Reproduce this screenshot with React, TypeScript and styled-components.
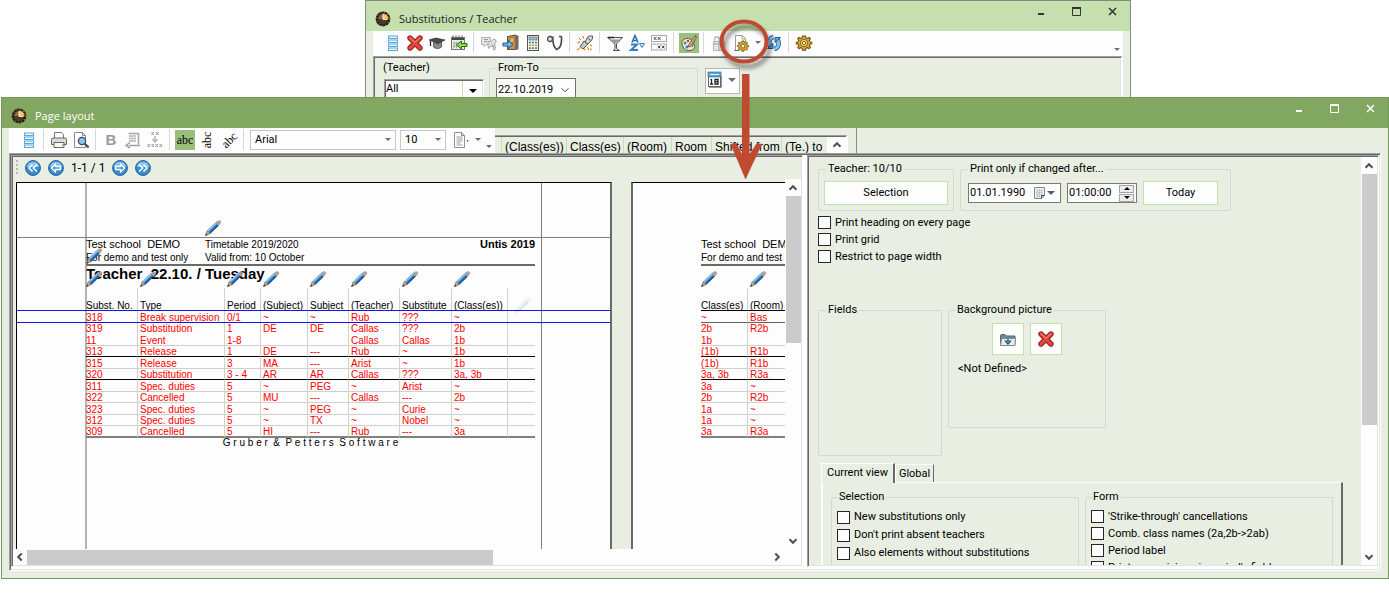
import React from "react";
import styled, { createGlobalStyle, css } from "styled-components";

const GlobalStyle = createGlobalStyle`
  *, *::before, *::after { box-sizing: border-box; }
  body { margin: 0; background: #ffffff; }
  button, input, select { font: inherit; color: inherit; margin: 0; }
`;

const color = {
  face: "#e8eee2",
  paper: "#fdfdfd",
  title: "#82a760",
  titleEdge: "#76975a",
  titleIdle: "#c5dfaf",
  dark: "#696969",
  mid: "#a0a0a0",
  light: "#e3e3e3",
  group: "#d2d7d2",
  thumb: "#cacbca",
  grid: "#d0d0d0",
};

const uiFont = `Roboto, "Liberation Sans", sans-serif`;
const printFont = `"Liberation Sans", Arial, sans-serif`;

/* ---------- shared window parts ---------- */

const Desktop = styled.div`
  position: relative;
  display: flex;
  flex-direction: column;
  height: 100vh;
  min-height: 400px;
  padding-bottom: 20px;
  overflow: hidden;
  font: 11px/14px ${uiFont};
  color: #000;
`;

const sunken = css`
  border-style: solid;
  border-width: 1px;
  border-color: ${color.mid} #fff #fff ${color.mid};
  box-shadow: inset 1px 1px 0 ${color.dark}, inset -1px -1px 0 ${color.light};
  padding: 1px;
`;

const BackWindow = styled.section`
  flex: none;
  width: 766px;
  height: 97px;
  margin-left: 365px;
  overflow: hidden;
  background: ${color.face};
  border: 1px solid #848a80;
  border-bottom: 0;
`;

const FrontWindow = styled.section`
  flex: 1;
  min-height: 0;
  display: flex;
  flex-direction: column;
  margin-left: 1px;
  background: ${color.face};
  border: 1px solid ${color.titleEdge};
`;

const TitleBar = styled.header<{ $active?: boolean }>`
  flex: none;
  display: flex;
  align-items: center;
  height: 30px;
  padding: 5px 9px 0 9px;
  font: 11px/16px "Open Sans", "Noto Sans", sans-serif;
  color: ${(p) => (p.$active ? "#ffffff" : "#20241c")};
  background: ${(p) => (p.$active ? color.title : color.titleIdle)};
`;

const TitleText = styled.h1`
  flex: 1;
  margin: 0 0 0 8px;
  font: inherit;
`;

const WindowButtons = styled.div`
  display: flex;
  gap: 19px;
  margin-top: -14px;
`;

const WindowButton = styled.button`
  width: 17px;
  height: 17px;
  padding: 0;
  border: 0;
  background: none;
  svg { display: block; }
`;

const ToolRow = styled.div`
  flex: none;
  display: flex;
  height: 25px;
  margin: 0 7px;
`;

const Tools = styled.div<{ $grow?: boolean }>`
  flex: ${(p) => (p.$grow ? "1" : "none")};
  display: flex;
  align-items: center;
  padding: 0 0 2px 9px;
  background: ${color.paper};
`;

const ToolButton = styled.button<{ $on?: boolean; $narrow?: boolean }>`
  display: flex;
  align-items: center;
  justify-content: center;
  width: ${(p) => (p.$narrow ? "11px" : p.$on ? "20px" : "22px")};
  height: 20px;
  margin: 0 ${(p) => (p.$on ? "1px" : "0")};
  padding: 0;
  border: 0;
  background: ${(p) => (p.$on ? "#9abf7c" : "none")};
`;

const Divider = styled.span`
  width: 1px;
  height: 21px;
  margin: 0 4px 0 3px;
  background: #d8d8d8;
`;

const Spacer = styled.span`
  flex: 1;
`;

const OverflowMark = styled.span`
  align-self: flex-end;
  display: flex;
  margin: 0 3px 3px;
`;

/* ---------- icons ---------- */

const Svg = ({ size = 18, children }: { size?: number; children: React.ReactNode }) => (
  <svg width={size} height={size} viewBox="0 0 18 18" fill="none" aria-hidden="true">
    {children}
  </svg>
);

const Caret = ({ fill = "#6e6e6e", w = 6 }: { fill?: string; w?: number }) => (
  <svg width={w} height={w / 2} viewBox="0 0 6 3" aria-hidden="true">
    <path d="M0 0h6L3 3z" fill={fill} />
  </svg>
);

const Chevron = ({ turn = 0, thin = false }: { turn?: number; thin?: boolean }) => (
  <svg width="10" height="10" viewBox="0 0 10 10" aria-hidden="true">
    <path
      d="M1.5 6.7L5 3.2l3.500 3.500"
      transform={`rotate(${turn} 5 5)`}
      fill="none"
      stroke="#505050"
      strokeWidth={thin ? 1 : 2}
    />
  </svg>
);

const Clock = () => (
  <Svg size={16}>
    <circle cx="9" cy="9" r="8.300" fill="#241c14" />
    <circle cx="9" cy="9" r="7.200" stroke="#a8977c" strokeWidth="1.200" strokeDasharray="1.100 2.670" />
    <circle cx="9" cy="9" r="5.800" fill="#4a3a26" />
    <path d="M9 9V2.800A6.200 6.200 0 0 1 15.200 9z" fill="#f7b64a" />
    <path d="M4 7q2-3.500 5-3.500V9H4z" fill="#8b6f45" />
    <path d="M9 3.500v6h5M9 9l3.500-3.500" stroke="#fff3dc" strokeWidth="1.100" />
  </Svg>
);

const ListIcon = () => (
  <Svg>
    {[2.5, 6.5, 10.5, 14.5].map((y) => (
      <rect key={y} x="4.500" y={y - 0.5} width="9" height="2.500" stroke="#56a8dd" fill="#f2f9fe" />
    ))}
  </Svg>
);

const CrossIcon = () => (
  <Svg>
    <path d="M4 4l10 10M14 4L4 14" stroke="#8e1f1a" strokeWidth="5.400" strokeLinecap="round" />
    <path d="M4 4l10 10M14 4L4 14" stroke="#e2453d" strokeWidth="3.400" strokeLinecap="round" />
    <path d="M4 3.500l5 5 5-5" stroke="#f39a92" strokeWidth="1" strokeLinecap="round" />
  </Svg>
);

const CapIcon = () => (
  <Svg>
    <path d="M1 6l7-2 9 2-7 3.500z" fill="#4a4a4a" stroke="#222" strokeWidth=".6" />
    <path d="M5.500 8.500v4.500c2 2 6 2 8 0V8L10 10z" fill="#8b8b8b" stroke="#222" strokeWidth=".6" />
    <path d="M2.500 7v5" stroke="#222" strokeWidth="1.300" />
  </Svg>
);

const CalendarArrowIcon = () => (
  <Svg>
    <rect x="1.500" y="3.500" width="13" height="12" fill="#e9e9e9" stroke="#777" />
    <path d="M2 5h12" stroke="#444" strokeWidth="2" />
    <path d="M3 1.500v3M6 1.500v3M9 1.500v3M12 1.500v3" stroke="#555" />
    <path d="M4 8v6M6.500 8v6M3 9h6M3 12h5" stroke="#aaa" />
    <path d="M6.500 11l5-4v2.500h5.500v3h-5.500V15z" fill="#8fdc3c" stroke="#2d6e12" />
  </Svg>
);

const ChatQuestionIcon = () => (
  <Svg>
    <path d="M1.500 3.500h9v7H6l-2 2v-2H1.500z" fill="#e6e6e6" stroke="#b0b0b0" />
    <path d="M8 7.500h5v5h-3l-1 2-1-2z" fill="#dcdcdc" stroke="#adadad" />
    <path d="M12 6.500q2.500-2.500 4 0 .7 2.500-1.500 3.500l1 4.500q-.5 2-2 1L13 11" fill="#e8e8e8" stroke="#9c9c9c" />
    <path d="M4 5.500h4M4 7.500h3" stroke="#9a9a9a" />
  </Svg>
);

const DoorIcon = () => (
  <Svg>
    <path d="M5.500 2.500L14 1v14.500H5.500z" fill="#c98e45" stroke="#5c4a3a" />
    <path d="M14 1.500h2.500v14H14z" fill="#6a6a6a" />
    <path d="M8 4l4-.7v5L8 9z" fill="#e3b878" stroke="#8d5e24" strokeWidth=".6" />
    <path d="M1 9h5V6.500L11 10.500 6 14.500V12H1z" fill="#6fb4ea" stroke="#1e5a94" />
  </Svg>
);

const CalculatorIcon = () => (
  <Svg>
    <rect x="3.500" y="1.500" width="11" height="15" fill="#f2f2f2" stroke="#555" />
    <rect x="5" y="3" width="8" height="3" fill="#9fc6b8" stroke="#555" strokeWidth=".6" />
    <path d="M5 8.500h8" stroke="#3b74b8" strokeWidth="1.600" strokeDasharray="2 1" />
    <path d="M5 11.300h8" stroke="#c99a3c" strokeWidth="1.600" strokeDasharray="2 1" />
    <path d="M5 14.100h8" stroke="#5a8f3c" strokeWidth="1.600" strokeDasharray="2 1" />
  </Svg>
);

const StethoscopeIcon = () => (
  <Svg>
    <path d="M7 2.500v4c0 4 1.500 7 3.500 9 3-1 5-5 5-9.500V3M13 2.500h3" stroke="#4d4d4d" strokeWidth="1.700" />
    <path d="M7 3v4" stroke="#8a8a8a" strokeWidth="2" />
    <circle cx="4" cy="5" r="2.500" fill="#d9e6ee" stroke="#4d4d4d" strokeWidth="1.300" />
  </Svg>
);

const FireworkIcon = () => (
  <Svg>
    <path d="M4 12.500L8 7l4 3-5 5z" fill="#c6c6c6" stroke="#555" />
    <path d="M9 8l3-5.500q3-1 4.500-.5.500 2-1 4.500L12 10z" fill="#d7d7d7" stroke="#555" />
    <path d="M12 4.500l2.500 2" stroke="#555" />
    <path d="M1.500 9l2.500-1M1 16l3-2M8 16.500l1-2M14 11l2 1M15.500 16L14 14.500" stroke="#e39b22" strokeWidth="1.500" />
    <path d="M3 4l2 2M7 2l.5 2.500M11.500 13l1 3" stroke="#d66a1b" />
  </Svg>
);

const FunnelIcon = () => (
  <Svg>
    <path d="M1.500 3.500h15L10.500 10v4.500l3 2h-6l1.500-2V10z" fill="#efefef" stroke="#4f4f4f" />
    <path d="M4 5.500h10l-4 3.500H8z" fill="#9b9b9b" />
    <path d="M2 3.500h6" stroke="#222" strokeWidth="1.500" />
  </Svg>
);

const SortIcon = () => (
  <Svg>
    <path d="M4 8.500L7 1.500l3 7M5 6.500h4" stroke="#2f6fae" strokeWidth="1.600" />
    <path d="M3 10.500h6l-6 5.500h7" stroke="#3a7dbf" strokeWidth="2" />
    <path d="M11.500 9.500h5L14 13.500z" fill="#d8ebfa" stroke="#3a7dbf" />
  </Svg>
);

const CrossGridIcon = () => (
  <Svg>
    <rect x="1.500" y="1.500" width="15" height="6" stroke="#a9a9a9" />
    <rect x="1.500" y="10" width="15" height="6" stroke="#a9a9a9" />
    <path d="M4 3.200l2.400 2.600M6.400 3.200L4 5.800M8 3.200l2.400 2.600M10.400 3.200L8 5.800" stroke="#333" />
    <path d="M8 11.700l2.400 2.600M10.400 11.700L8 14.300M12 11.700l2.400 2.600M14.400 11.700L12 14.300" stroke="#333" />
  </Svg>
);

const PaletteIcon = () => (
  <Svg>
    <path
      d="M2 10c-1-4 4-7 8-5 3 1 0 4 3 5s2 6-3 6.500S3 14 2 10z"
      fill="#ece6da"
      stroke="#5d5648"
    />
    <circle cx="5" cy="9" r="1.500" fill="#3aa05a" />
    <circle cx="8" cy="7" r="1.300" fill="#d23f35" />
    <circle cx="7" cy="13" r="1.500" fill="#3f77c9" />
    <path d="M8 12l6-9 2-1.500v3L10 13z" fill="#d7b07a" stroke="#5b4630" strokeWidth=".8" />
    <path d="M12 13l3-7" stroke="#777" strokeWidth="1.400" />
  </Svg>
);

const GiftIcon = () => (
  <Svg>
    <path d="M3.500 7.500h11v9h-11z" fill="#e6e6e6" stroke="#b3b3b3" />
    <path d="M5 7c-2-5 4-6 4-1 0-5 6-4 4 1M9 6v10M3 10h11" stroke="#b3b3b3" strokeWidth="1.400" />
  </Svg>
);

const gearPath =
  "M9 1.500l1.600 0 .5 2 1.700.7 1.800-1.100 1.300 1.300-1.100 1.800.7 1.700 2 .5v1.600l-2 .5-.7 1.700 1.100 1.800-1.300 1.300-1.800-1.100-1.700.7-.5 2H7.400l-.5-2-1.700-.7-1.800 1.100-1.300-1.300 1.100-1.800-.7-1.700-2-.5V8.400l2-.5.7-1.700L2.100 4.400l1.300-1.300 1.800 1.100 1.700-.7.5-2z";

const GearIcon = () => (
  <Svg>
    <g transform="translate(.8 .6) scale(.92)">
      <path d={gearPath} fill="#d9a637" stroke="#6e4d10" strokeWidth="1.100" />
      <circle cx="9" cy="9.200" r="4" fill="#f1cf72" stroke="#7d5710" strokeWidth=".9" />
      <circle cx="9" cy="9.200" r="1.700" fill="#fff" stroke="#7d5710" strokeWidth="1" />
    </g>
  </Svg>
);

const PageGearIcon = () => (
  <Svg>
    <path d="M3.500 16.500v-15h7l3 3v4" fill="#fff" stroke="#9a9a9a" />
    <path d="M10 1.500V5h3.500" stroke="#9a9a9a" />
    <path d="M2 16.500h5" stroke="#777" />
    <g transform="translate(5 6) scale(.66)">
      <path d={gearPath} fill="#dda936" stroke="#7d5710" strokeWidth="1.400" />
      <circle cx="9" cy="9.200" r="3" fill="#fff3cf" stroke="#7d5710" strokeWidth="1.400" />
    </g>
  </Svg>
);

const RefreshIcon = () => (
  <Svg>
    <path d="M8.500 3C4 4 3 10 6 13" stroke="#1f5d8f" strokeWidth="4.400" />
    <path d="M9.500 15c4.500-1 5.500-7 2.500-10" stroke="#1f5d8f" strokeWidth="4.400" />
    <path d="M8.500 3C4 4 3 10 6 13" stroke="#8cc8ee" strokeWidth="2.600" />
    <path d="M9.500 15c4.500-1 5.500-7 2.500-10" stroke="#8cc8ee" strokeWidth="2.600" />
    <path d="M2.500 14.500H8V9.500z" fill="#5ba7dc" stroke="#1f5d8f" />
    <path d="M15.500 3.500H10V8.500z" fill="#5ba7dc" stroke="#1f5d8f" />
  </Svg>
);

const PrinterIcon = () => (
  <Svg>
    <path d="M4.500 8V1.500h7l2 2V8" fill="#fff" stroke="#777" />
    <path d="M1.500 8.500q0-1.500 1.500-1.500h12q1.500 0 1.500 1.500v5h-15z" fill="#d9d9d9" stroke="#666" />
    <path d="M4 11.500h10v5H4z" fill="#f6f6f6" stroke="#666" />
    <path d="M12 14h2" stroke="#74b343" strokeWidth="1.600" />
  </Svg>
);

const PreviewIcon = () => (
  <Svg>
    <path d="M2.500 16.500v-15h8l3 3v12z" fill="#fff" stroke="#8a8a8a" />
    <path d="M10.500 1.500v3h3" stroke="#8a8a8a" />
    <circle cx="10" cy="10" r="3.600" fill="#8cc4ee" stroke="#3d4a58" strokeWidth="1.300" />
    <path d="M12.600 12.700l4 3.700" stroke="#5b4a3a" strokeWidth="2.200" />
  </Svg>
);

const PageTurnIcon = () => (
  <Svg>
    <path d="M4.500 2.500h10v11" stroke="#a9a9a9" strokeWidth="1.600" />
    <path d="M5 5h7M5 7.500h7M5 10h7" stroke="#b5b5b5" strokeWidth="1.300" />
    <path d="M16 14.500H5M6 11.500l-4 3 4 2.500" stroke="#a0a0a0" strokeWidth="1.500" />
  </Svg>
);

const ShrinkIcon = () => (
  <Svg>
    <path d="M5.500 1l2.500 3M8 1L5.500 4M10 1l2.500 3M12.500 1L10 4" stroke="#9a9a9a" />
    <path d="M9 5v5M6.500 8L9 11l2.500-3" stroke="#b8b8b8" strokeWidth="1.500" />
    <path
      d="M1.500 13l2.500 3M4 13l-2.500 3M5.500 13l2.500 3M8 13l-2.500 3M9.500 13l2.500 3M12 13l-2.500 3M13.500 13l2.500 3M16 13l-2.500 3"
      stroke="#9a9a9a"
    />
  </Svg>
);

const DocIcon = () => (
  <Svg>
    <path d="M2.500 16.500v-15h7l3 3v12z" fill="#fff" stroke="#8f8f8f" />
    <path d="M9.500 1.500v3h3" stroke="#8f8f8f" />
    <path d="M4.500 6h6M4.500 8h6M4.500 10h6M4.500 12h4M4.500 14h6" stroke="#9a9a9a" />
    <path d="M15.500 9v1.500" stroke="#444" strokeWidth="1.300" />
  </Svg>
);

const CalendarDayIcon = () => (
  <Svg>
    <rect x="2.500" y="1.500" width="12" height="14" fill="#fdfdfd" stroke="#666" />
    <rect x="2" y="1" width="13" height="5" fill="#5aa5d8" stroke="#2a628c" strokeWidth=".6" />
    <path d="M4 3.500h9" stroke="#e4f2fb" />
    <path d="M5.500 8v5M4.500 8.500h1M4 13h3M9 8.500h3v4.500H9zM9 10.700h3" stroke="#222" strokeWidth="1.300" />
    <path d="M3 16.500h12.500V4" stroke="#999" />
  </Svg>
);

const DatePickIcon = () => (
  <svg width="21" height="12" viewBox="0 0 21 12" fill="none" aria-hidden="true">
    <path d="M.5.500h10v8l-3 3h-7z" fill="#efefef" stroke="#888" />
    <path d="M2 3.500h7M2 5.500h7M2 7.500h7M2 9.500h4M3.500 2.500v8M5.500 2.500v8M7.500 2.500v6" stroke="#b4b4b4" strokeWidth=".6" />
    <path d="M10.500 8.500h-3v3" stroke="#444" />
    <path d="M13 4h8l-4 4z" fill="#44608c" />
  </svg>
);

const FolderIcon = () => (
  <Svg>
    <path d="M1.500 14.500V6q0-1.500 1.500-1.500h3L7.500 6h8.500v8.500z" fill="#7c848c" stroke="#5b636c" />
    <path d="M1.500 15.500l1-7h14l-.500 7z" fill="#e2edf4" stroke="#7c8790" />
    <path d="M9 9v2.500M6.500 11L9 14l2.500-3z" stroke="#1f4d80" fill="#bcd9ef" strokeWidth="1.200" />
  </Svg>
);

const NavIcon = ({ back, double }: { back?: boolean; double?: boolean }) => (
  <svg width="16" height="16" viewBox="0 0 16 16" fill="none" aria-hidden="true">
    <circle cx="8" cy="8" r="7.400" fill="#3f8ccf" stroke="#1d5a96" />
    <path d="M1.800 7a6.300 6.300 0 0 1 12.400 0z" fill="#8cc0ea" />
    <g transform={back ? undefined : "translate(16 0) scale(-1 1)"} stroke="#fff" strokeLinejoin="round">
      {double ? (
        <path d="M7.500 4.500L4 8l3.500 3.500M11.800 4.500L8.300 8l3.500 3.500" strokeWidth="1.600" />
      ) : (
        <path d="M7.500 4L3.500 8l4 4v-2.500h5v-3h-5z" fill="#4d97d6" strokeWidth="1.300" />
      )}
    </g>
  </svg>
);

const PencilArt = () => (
  <svg width="17" height="16" viewBox="0 0 17 16" aria-hidden="true">
    <path d="M.5 15.500l1.700-5 3.200 3z" fill="#c9a376" stroke="#6b5238" strokeWidth=".6" />
    <path d="M.3 15.800l.8-2.300 1.500 1.400z" fill="#333" />
    <path d="M2.200 10.500L10.500 2.500l3.200 3-8.300 8z" fill="#2f74bd" />
    <path d="M2.200 10.500L10.500 2.500l1.300 1.200-8.300 8z" fill="#8fc4ec" />
    <path d="M4.700 12.900L13 4.800l.7.700-8.300 8z" fill="#1c4577" />
    <path d="M10.500 2.500L12.500.8l3 2.900-1.800 1.800z" fill="#9aa0a6" />
    <path d="M12.500.8q1.800-1.200 3 0t0 2.900z" fill="#d98f86" />
  </svg>
);

/* ---------- back window ---------- */

const BackBody = styled.div`
  display: flex;
  align-items: flex-start;
  height: 60px;
  margin: 0 7px;
  padding: 4px 8px 0 9px;
  border-top: 1px solid ${color.mid};
  border-left: 1px solid ${color.mid};
  border-right: 2px solid #fff;
  box-shadow: inset 1px 1px 0 ${color.dark}, inset -1px 0 0 ${color.light};
`;

const Stack = styled.label`
  display: flex;
  flex-direction: column;
  width: 101px;
  gap: 4px;
`;

const SunkenSelect = styled.span`
  ${sunken}
  display: grid;
  height: 24px;
  background: ${color.paper};
  margin: 0 0 0 1px;
  select {
    grid-area: 1 / 1;
    appearance: none;
    border: 0;
    background: none;
    padding: 0;
    height: 16px;
  }
`;

const DropMark = styled.span<{ $line?: boolean }>`
  grid-area: 1 / 1;
  justify-self: end;
  display: flex;
  align-items: center;
  justify-content: center;
  width: 20px;
  pointer-events: none;
  border-left: ${(p) => (p.$line ? `1px solid ${color.titleIdle}` : "0")};
`;

const Group = styled.fieldset<{ $w?: string; $h?: string; $pad?: string }>`
  flex: ${(p) => (p.$w ? `0 0 ${p.$w}` : "1 1 0")};
  min-width: 0;
  height: ${(p) => p.$h || "auto"};
  margin: 0;
  padding: ${(p) => p.$pad || "5px"};
  border: 1px solid ${color.group};
  border-radius: 2px;
`;

const Legend = styled.legend<{ $in?: string }>`
  margin-left: ${(p) => p.$in || "0"};
  padding: 0 2px;
  line-height: 14px;
`;

const FromToGroup = styled(Group)`
  height: 60px;
  margin-left: 5px;
`;

const DateSelect = styled.span`
  display: grid;
  width: 80px;
  height: 24px;
  background: ${color.paper};
  border: 1px solid #707070;
  input {
    grid-area: 1 / 1;
    width: 76px;
    border: 0;
    background: none;
    padding: 0 0 0 1px;
  }
`;

const CalButton = styled.button`
  display: flex;
  align-items: center;
  gap: 4px;
  width: 35px;
  height: 26px;
  margin: 7px 0 0 7px;
  padding: 0 0 2px 0;
  background: ${color.paper};
  border: 1px solid #b4b8b0;
`;

/* ---------- front window ---------- */

const PickBox = styled.span<{ $w: number; $gap: number }>`
  display: grid;
  align-items: center;
  width: ${(p) => p.$w}px;
  height: 20px;
  margin-left: ${(p) => p.$gap}px;
  border: 1px solid #c8c8c8;
  background: ${color.paper};
  select {
    grid-area: 1 / 1;
    appearance: none;
    border: 0;
    background: none;
    padding: 0 4px;
  }
`;

const PickMark = styled.span`
  grid-area: 1 / 1;
  justify-self: end;
  display: flex;
  margin-right: 4px;
  pointer-events: none;
`;

const PickTail = styled.span`
  display: flex;
  margin-left: 4px;
`;

const BoldGlyph = styled.b`
  font: bold 15px/16px ${printFont};
  color: #9a9a9a;
`;

const AbcGlyph = styled.span<{ $turn?: number }>`
  font: 12px/12px "Liberation Serif", serif;
  transform: rotate(${(p) => p.$turn || 0}deg);
`;

const ColumnStrip = styled.div`
  display: flex;
  align-items: flex-end;
  width: 362px;
  border-right: 1px solid #8a8f86;
  padding-right: 8px;
`;

const StripCells = styled.div`
  flex: 1;
  display: flex;
  height: 18px;
  padding-left: 6px;
  border-top: 1px solid ${color.mid};
  border-right: 2px solid #fff;
  box-shadow: inset 0 1px 0 ${color.dark};
  font: 12px/20px ${printFont};
`;

const StripCell = styled.span<{ $w: number }>`
  width: ${(p) => p.$w}px;
  margin-top: 1px;
  padding-left: 3px;
  border-left: 1px solid ${color.titleIdle};
  white-space: nowrap;
`;

const StripUp = styled.button`
  flex: 1;
  margin-top: 1px;
  display: flex;
  align-items: center;
  justify-content: center;
  padding: 0;
  border: 0;
  background: ${color.paper};
`;

const Frame = styled.div`
  ${sunken}
  flex: 1;
  min-height: 0;
  display: grid;
  grid-template-columns: minmax(0, 792fr) 4px minmax(0, 572fr);
  margin: 0 7px 7px;
  background: linear-gradient(#fff, #fff) content-box;
`;

const Pane = styled.div`
  ${sunken}
  min-width: 0;
  min-height: 0;
  margin-bottom: 2px;
  background: ${color.face};
  display: grid;
  grid-template-columns: minmax(0, 1fr) 16px;
  overflow: hidden;
`;

const PreviewPane = styled(Pane)`
  grid-template-rows: 22px minmax(0, 1fr) 16px;
`;

const OptionsPane = styled(Pane)`
  grid-column: 3;
`;

const PageNav = styled.nav`
  grid-column: 1 / -1;
  display: flex;
  align-items: center;
  gap: 7px;
  padding-left: 3px;
  font-size: 12px;
`;

const Grip = styled.span`
  width: 2px;
  height: 16px;
  background: repeating-linear-gradient(#b5bab0 0 2px, transparent 2px 4px);
`;

const NavButton = styled.button`
  display: flex;
  padding: 0;
  border: 0;
  background: none;
`;

const Viewer = styled.div`
  display: flex;
  gap: 19px;
  padding: 3px 0 0 3px;
  overflow: hidden;
`;

const Page = styled.article<{ $open?: boolean }>`
  position: relative;
  flex: none;
  width: 596px;
  height: 820px;
  padding: 55px 0 0 ${(p) => (p.$open ? 68 : 69)}px;
  background: ${color.paper};
  border: 1px solid #000;
  border-left: ${(p) => (p.$open ? "2px solid #6a6a6a" : "1px solid #000")};
  border-right: 2px solid #6a6a6a;
  font: 10px/13px ${printFont};
`;

const Guide = styled.i<{ $x?: number; $y?: number; $soft?: boolean; $blue?: boolean }>`
  position: absolute;
  background: ${(p) => (p.$blue ? "#1414e6" : "#808080")};
  ${(p) =>
    p.$x !== undefined
      ? `left: ${p.$x}px; top: 0; bottom: 0; width: ${p.$soft ? 2 : 1}px;`
      : `top: ${p.$y}px; left: 0; right: 0; height: 1px;`}
  ${(p) => (p.$soft ? "opacity: .6;" : "")}
`;

const PencilButton = styled.button<{ $up?: number; $left?: number }>`
  position: absolute;
  left: ${(p) => p.$left || 0}px;
  top: ${(p) => -(p.$up || 17)}px;
  padding: 0;
  border: 0;
  background: none;
  svg { display: block; }
`;

const FaintPencil = styled.span`
  position: absolute;
  right: 3px;
  bottom: -3px;
  opacity: 0.14;
  svg { display: block; }
`;

const PrintHead = styled.header`
  display: grid;
  grid-template-columns: 119px 1fr auto;
  width: 449px;
  border-bottom: 2px solid ${color.dark};
  white-space: pre;
`;

const HeadCell = styled.div<{ $big?: boolean; $bold?: boolean }>`
  position: relative;
  font-size: ${(p) => (p.$big ? 11 : 10)}px;
  font-weight: ${(p) => (p.$bold ? "bold" : "normal")};
`;

const PrintTitle = styled.h2`
  height: 22px;
  margin: 0;
  font: bold 15px/15px ${printFont};
  white-space: pre;
`;

const SubstTable = styled.table<{ $w: number }>`
  width: ${(p) => p.$w}px;
  table-layout: fixed;
  border-collapse: separate;
  border-spacing: 0;
  line-height: 8px;
  th, td {
    position: relative;
    padding: 0 0 0 2px;
    text-align: left;
    vertical-align: bottom;
    white-space: nowrap;
    font-weight: normal;
    border-right: 1px solid ${color.grid};
  }
  th:first-child, td:first-child { padding-left: 0; }
  th:last-child, td:last-child { border-right: 0; }
  th { height: 23px; border-bottom: 1px solid #000; }
  td { height: 12px; color: #f00; border-bottom: 1px solid ${color.grid}; }
  tr:nth-child(even) td { height: 11px; }
  tbody tr:last-child td { border-bottom: 2px solid #808080; }
`;

const SubstRow = styled.tr<{ $rule?: string }>`
  && td { border-bottom-color: ${(p) => p.$rule || color.grid}; }
`;

const PrintFoot = styled.footer`
  width: 449px;
  text-align: center;
  line-height: 10px;
  white-space: pre;
`;

/* ---------- scroll bars ---------- */

const Track = styled.div<{ $across?: boolean }>`
  display: flex;
  flex-direction: ${(p) => (p.$across ? "row" : "column")};
  background: ${color.paper};
  ${(p) => (p.$across ? "grid-column: 1 / -1; padding-right: 17px;" : "")}
`;

const TrackButton = styled.button<{ $across?: boolean }>`
  flex: none;
  display: flex;
  align-items: center;
  justify-content: center;
  width: ${(p) => (p.$across ? "14px" : "16px")};
  height: ${(p) => (p.$across ? "16px" : "17px")};
  padding: 0;
  border: 0;
  background: none;
`;

const Thumb = styled.span<{ $size: number; $across?: boolean }>`
  flex: 0 1 ${(p) => p.$size}%;
  margin: ${(p) => (p.$across ? "1px 0 0" : "0 0 0 1px")};
  background: ${color.thumb};
`;

const ScrollBar = ({ size, across }: { size: number; across?: boolean }) => (
  <Track $across={across}>
    <TrackButton $across={across} aria-label="Scroll back">
      <Chevron turn={across ? -90 : 0} />
    </TrackButton>
    <Thumb $size={size} $across={across} />
    <Spacer />
    <TrackButton $across={across} aria-label="Scroll forward">
      <Chevron turn={across ? 90 : 180} />
    </TrackButton>
  </Track>
);

/* ---------- options ---------- */

const Options = styled.form`
  display: flex;
  flex-direction: column;
  min-height: 0;
  padding: 5px 9px 0;
  overflow: hidden;
`;

const Row = styled.div<{ $top?: number; $center?: boolean }>`
  flex: none;
  display: flex;
  align-items: ${(p) => (p.$center ? "center" : "flex-start")};
  gap: 6px;
  margin-top: ${(p) => p.$top || 0}px;
`;

const PushButton = styled.button<{ $w?: string }>`
  width: ${(p) => p.$w || "100%"};
  height: 24px;
  padding: 0;
  background: ${color.paper};
  border: 1px solid ${color.titleIdle};
`;

const IconPair = styled.div`
  display: flex;
  justify-content: center;
  gap: 6px;
  padding-top: 1px;
`;

const IconButton = styled(PushButton)`
  display: flex;
  align-items: center;
  justify-content: center;
  width: 32px;
  height: 32px;
`;

const FieldBox = styled.span<{ $w: number }>`
  display: flex;
  align-items: center;
  width: ${(p) => p.$w}px;
  height: 20px;
  background: ${color.paper};
  border: 1px solid #7a7a7a;
  input {
    flex: 1;
    min-width: 0;
    padding: 0 0 0 1px;
    border: 0;
    background: none;
  }
`;

const PickButton = styled.button`
  display: flex;
  padding: 0;
  margin-right: 5px;
  border: 0;
  background: none;
`;

const Spin = styled.span`
  display: grid;
  gap: 1px;
  width: 15px;
  margin-right: 2px;
  button {
    display: flex;
    align-items: center;
    justify-content: center;
    height: 8px;
    padding: 0;
    border: 1px solid #a5a5a5;
    background: #ececec;
  }
`;

const Checks = styled.div<{ $top?: number }>`
  flex: none;
  display: flex;
  flex-direction: column;
  margin-top: ${(p) => p.$top || 0}px;
`;

const CheckLabel = styled.label<{ $pitch: number }>`
  display: flex;
  align-items: center;
  gap: 4px;
  height: ${(p) => p.$pitch}px;
  white-space: nowrap;
  input {
    appearance: none;
    width: 13px;
    height: 13px;
    border: 1px solid #262626;
    background: ${color.paper};
  }
`;

const Note = styled.p`
  margin: 7px 0 0;
  padding-left: 4px;
`;

const TabList = styled.div`
  flex: none;
  display: flex;
  align-items: flex-end;
  margin: 7px 0 0 3px;
`;

const Tab = styled.button<{ $on?: boolean }>`
  position: relative;
  height: ${(p) => (p.$on ? 20 : 18)}px;
  margin-bottom: ${(p) => (p.$on ? -1 : 0)}px;
  padding: ${(p) => (p.$on ? "0 5px 2px 5px" : "0 3px")};
  white-space: nowrap;
  background: ${color.face};
  border: 1px solid #fff;
  border-bottom: 0;
  border-right: ${(p) => (p.$on ? "2px" : "1px")} solid ${color.dark};
`;

const TabPanel = styled.div`
  flex: none;
  display: flex;
  gap: 6px;
  height: 220px;
  margin: 0 9px 0 3px;
  padding: 7px 8px 0;
  border-top: 1px solid #fff;
  border-left: 2px solid #fff;
  border-right: 2px solid ${color.dark};
`;

const Check = ({ text, pitch = 17 }: { text: string; pitch?: number }) => (
  <CheckLabel $pitch={pitch}>
    <input type="checkbox" />
    {text}
  </CheckLabel>
);

/* ---------- annotation ---------- */

const Callout = styled.svg`
  position: absolute;
  left: 700px;
  top: 0;
  pointer-events: none;
`;

/* ---------- data ---------- */

const mainColumns: Array<[string, number]> = [
  ["Subst. No.", 52],
  ["Type", 87],
  ["Period", 36],
  ["(Subject)", 47],
  ["Subject", 41],
  ["(Teacher)", 51],
  ["Substitute", 52],
  ["(Class(es))", 56],
  ["", 27],
];

const mainRows = [
  ["318", "Break supervision", "0/1", "~", "~", "Rub", "???", "~"],
  ["319", "Substitution", "1", "DE", "DE", "Callas", "???", "2b"],
  ["11", "Event", "1-8", "", "", "Callas", "Callas", "1b"],
  ["313", "Release", "1", "DE", "---", "Rub", "~", "1b"],
  ["315", "Release", "3", "MA", "---", "Arist", "~", "1b"],
  ["320", "Substitution", "3 - 4", "AR", "AR", "Callas", "???", "3a, 3b"],
  ["311", "Spec. duties", "5", "~", "PEG", "~", "Arist", "~"],
  ["322", "Cancelled", "5", "MU", "---", "Callas", "---", "2b"],
  ["323", "Spec. duties", "5", "~", "PEG", "~", "Curie", "~"],
  ["312", "Spec. duties", "5", "~", "TX", "~", "Nobel", "~"],
  ["309", "Cancelled", "5", "HI", "---", "Rub", "---", "3a"],
];

const sideColumns: Array<[string, number]> = [
  ["Class(es)", 47],
  ["(Room)", 60],
];

const sideRows = [
  ["~", "Bas"],
  ["2b", "R2b"],
  ["1b", ""],
  ["(1b)", "R1b"],
  ["(1b)", "R1b"],
  ["3a, 3b", "R3a"],
  ["3a", "~"],
  ["2b", "R2b"],
  ["1a", "~"],
  ["1a", "~"],
  ["3a", "R3a"],
];

const rowRules: Record<number, string> = {
  0: "#606060",
  1: "transparent",
  3: "#000",
  5: "#000",
  10: "#808080",
};

const stripColumns: Array<[string, number]> = [
  ["(Class(es))", 65],
  ["Class(es)", 57],
  ["(Room)", 48],
  ["Room", 40],
  ["Shifted from", 70],
  ["(Te.) to", 46],
];

const Pencil = ({ up, left }: { up?: number; left?: number }) => (
  <PencilButton $up={up} $left={left} aria-label="Edit">
    <PencilArt />
  </PencilButton>
);

const PrintTable = ({ columns, rows }: { columns: Array<[string, number]>; rows: string[][] }) => (
  <SubstTable $w={columns.reduce((sum, c) => sum + c[1], 0)}>
    <colgroup>
      {columns.map(([name, w]) => (
        <col key={name} width={w} />
      ))}
    </colgroup>
    <thead>
      <tr>
        {columns.map(([name], i) => (
          <th key={name}>
            {name}
            {name ? <Pencil left={i ? 2 : 0} /> : <FaintPencil><PencilArt /></FaintPencil>}
          </th>
        ))}
      </tr>
    </thead>
    <tbody>
      {rows.map((cells, i) => (
        <SubstRow key={i} $rule={rowRules[i]}>
          {columns.map(([name], c) => (
            <td key={name}>{cells[c]}</td>
          ))}
        </SubstRow>
      ))}
    </tbody>
  </SubstTable>
);

const Controls = ({ ink }: { ink: string }) => (
  <WindowButtons>
    <WindowButton aria-label="Minimize">
      <svg width="17" height="17" fill="none"><path d="M6 11h6" stroke={ink} strokeWidth="2" /></svg>
    </WindowButton>
    <WindowButton aria-label="Maximize">
      <svg width="17" height="17" fill="none">
        <path d="M4.500 4.500h8v8h-8z" stroke={ink} />
        <path d="M4 5h9" stroke={ink} strokeWidth="2" />
      </svg>
    </WindowButton>
    <WindowButton aria-label="Close">
      <svg width="17" height="17" fill="none"><path d="M5 5l7 7M12 5l-7 7" stroke={ink} strokeWidth="1.500" /></svg>
    </WindowButton>
  </WindowButtons>
);

type ToolItem = [string, React.ReactNode] | "|";

const backTools: ToolItem[] = [
  ["List", <ListIcon />],
  ["Delete", <CrossIcon />],
  ["Teacher", <CapIcon />],
  ["Calendar", <CalendarArrowIcon />],
  "|",
  ["Info", <ChatQuestionIcon />],
  ["Room", <DoorIcon />],
  ["Counter", <CalculatorIcon />],
  ["Diagnosis", <StethoscopeIcon />],
  "|",
  ["Event", <FireworkIcon />],
  "|",
  ["Filter", <FunnelIcon />],
  ["Sort", <SortIcon />],
  ["Grid", <CrossGridIcon />],
  "|",
];

export default function App() {
  return (
    <>
      <GlobalStyle />
      <Desktop>
        <BackWindow>
          <TitleBar>
            <Clock />
            <TitleText>Substitutions / Teacher</TitleText>
            <Controls ink="#333" />
          </TitleBar>
          <ToolRow>
            <Tools $grow>
              {backTools.map((item, i) =>
                item === "|" ? (
                  <Divider key={i} />
                ) : (
                  <ToolButton key={i} aria-label={item[0]}>{item[1]}</ToolButton>
                )
              )}
              <ToolButton $on aria-label="Colours"><PaletteIcon /></ToolButton>
              <Divider />
              <ToolButton aria-label="Holiday"><GiftIcon /></ToolButton>
              <ToolButton aria-label="Page layout"><PageGearIcon /></ToolButton>
              <ToolButton $narrow aria-label="More"><Caret /></ToolButton>
              <ToolButton aria-label="Refresh"><RefreshIcon /></ToolButton>
              <Divider />
              <ToolButton aria-label="Settings"><GearIcon /></ToolButton>
              <Spacer />
              <OverflowMark><Caret /></OverflowMark>
            </Tools>
          </ToolRow>
          <BackBody>
            <Stack>
              (Teacher)
              <SunkenSelect>
                <select defaultValue="All"><option>All</option></select>
                <DropMark $line><Caret fill="#000" w={8} /></DropMark>
              </SunkenSelect>
            </Stack>
            <FromToGroup $w="209px" $pad="3px 6px">
              <Legend>From-To</Legend>
              <DateSelect>
                <input aria-label="From" defaultValue="22.10.2019" />
                <DropMark><Chevron turn={180} thin /></DropMark>
              </DateSelect>
            </FromToGroup>
            <CalButton aria-label="Pick a day">
              <CalendarDayIcon />
              <Caret w={8} />
            </CalButton>
          </BackBody>
        </BackWindow>

        <FrontWindow>
          <TitleBar $active>
            <Clock />
            <TitleText>Page layout</TitleText>
            <Controls ink="#fff" />
          </TitleBar>
          <ToolRow>
            <Tools>
              <ToolButton aria-label="List"><ListIcon /></ToolButton>
              <Divider />
              <ToolButton aria-label="Print"><PrinterIcon /></ToolButton>
              <ToolButton aria-label="Preview"><PreviewIcon /></ToolButton>
              <Divider />
              <ToolButton><BoldGlyph>B</BoldGlyph></ToolButton>
              <ToolButton aria-label="Wrap"><PageTurnIcon /></ToolButton>
              <ToolButton aria-label="Shrink"><ShrinkIcon /></ToolButton>
              <Divider />
              <ToolButton $on><AbcGlyph>abc</AbcGlyph></ToolButton>
              <ToolButton><AbcGlyph $turn={-90}>abc</AbcGlyph></ToolButton>
              <ToolButton><AbcGlyph $turn={-45}>abc</AbcGlyph></ToolButton>
              <Divider />
              <PickBox $w={146} $gap={2}>
                <select aria-label="Font" defaultValue="Arial"><option>Arial</option></select>
                <PickMark><Caret /></PickMark>
              </PickBox>
              <PickBox $w={46} $gap={4}>
                <select aria-label="Font size" defaultValue="10"><option>10</option></select>
                <PickMark><Caret /></PickMark>
              </PickBox>
              <PickTail>
                <ToolButton aria-label="Document"><DocIcon /></ToolButton>
                <ToolButton $narrow aria-label="More"><Caret /></ToolButton>
              </PickTail>
              <OverflowMark><Caret /></OverflowMark>
            </Tools>
            <ColumnStrip>
              <StripCells>
                {stripColumns.map(([name, w]) => (
                  <StripCell key={name} $w={w}>{name}</StripCell>
                ))}
                <StripUp aria-label="Scroll up"><Chevron /></StripUp>
              </StripCells>
            </ColumnStrip>
          </ToolRow>

          <Frame>
            <PreviewPane>
              <PageNav>
                <Grip />
                <NavButton aria-label="First page"><NavIcon back double /></NavButton>
                <NavButton aria-label="Previous page"><NavIcon back /></NavButton>
                <span>1-1 / 1</span>
                <NavButton aria-label="Next page"><NavIcon /></NavButton>
                <NavButton aria-label="Last page"><NavIcon double /></NavButton>
              </PageNav>
              <Viewer>
                <Page>
                  <Guide $x={68} $soft />
                  <Guide $x={524} />
                  <Guide $y={54} />
                  <PrintHead>
                    <HeadCell $big>{"Test school  DEMO"}</HeadCell>
                    <HeadCell>
                      Timetable 2019/2020
                      <Pencil up={18} />
                    </HeadCell>
                    <HeadCell $big $bold>Untis 2019</HeadCell>
                    <HeadCell>
                      For demo and test only
                      <Pencil up={3} />
                    </HeadCell>
                    <HeadCell>Valid from: 10 October</HeadCell>
                  </PrintHead>
                  <PrintTitle>{"Teacher  22.10. / Tuesday"}</PrintTitle>
                  <PrintTable columns={mainColumns} rows={mainRows} />
                  <PrintFoot>{"G r u b e r  &  P e t t e r s  S o f t w a r e"}</PrintFoot>
                  <Guide $y={127} $blue />
                  <Guide $y={139} $blue />
                </Page>
                <Page $open>
                  <PrintHead>
                    <HeadCell $big>{"Test school  DEMO"}</HeadCell>
                    <HeadCell />
                    <HeadCell />
                    <HeadCell>For demo and test only</HeadCell>
                  </PrintHead>
                  <PrintTitle as="div" />
                  <PrintTable columns={sideColumns} rows={sideRows} />
                </Page>
              </Viewer>
              <ScrollBar size={39.7} />
              <ScrollBar size={60.4} across />
            </PreviewPane>

            <OptionsPane>
              <Options onSubmit={(e) => e.preventDefault()}>
                <Row>
                  <Group $w="136px">
                    <Legend $in="2px">Teacher: 10/10</Legend>
                    <PushButton type="button">Selection</PushButton>
                  </Group>
                  <Group $w="271px" $pad="5px 7px">
                    <Legend>Print only if changed after...</Legend>
                    <Row $center>
                      <FieldBox $w={93}>
                        <input aria-label="Changed after date" defaultValue="01.01.1990" />
                        <PickButton type="button" aria-label="Open calendar"><DatePickIcon /></PickButton>
                      </FieldBox>
                      <FieldBox $w={70}>
                        <input aria-label="Changed after time" defaultValue="01:00:00" />
                        <Spin>
                          <button type="button" aria-label="Later">
                            <svg width="6" height="3" viewBox="0 0 6 3"><path d="M0 3h6L3 0z" /></svg>
                          </button>
                          <button type="button" aria-label="Earlier"><Caret fill="#000" /></button>
                        </Spin>
                      </FieldBox>
                      <PushButton type="button" $w="75px">Today</PushButton>
                    </Row>
                  </Group>
                </Row>
                <Checks $top={3}>
                  <Check text="Print heading on every page" />
                  <Check text="Print grid" />
                  <Check text="Restrict to page width" />
                </Checks>
                <Row $top={38}>
                  <Group $w="124px" $h="153px">
                    <Legend $in="2px">Fields</Legend>
                  </Group>
                  <Group $w="158px" $h="125px">
                    <Legend $in="1px">Background picture</Legend>
                    <IconPair>
                      <IconButton type="button" aria-label="Load picture"><FolderIcon /></IconButton>
                      <IconButton type="button" aria-label="Remove picture"><CrossIcon /></IconButton>
                    </IconPair>
                    <Note>&lt;Not Defined&gt;</Note>
                  </Group>
                </Row>
                <TabList role="tablist">
                  <Tab type="button" role="tab" aria-selected="true" $on>Current view</Tab>
                  <Tab type="button" role="tab">Global</Tab>
                </TabList>
                <TabPanel role="tabpanel">
                  <Group $pad="4px 5px">
                    <Legend>Selection</Legend>
                    <Check pitch={18} text="New substitutions only" />
                    <Check pitch={18} text="Don't print absent teachers" />
                    <Check pitch={18} text="Also elements without substitutions" />
                  </Group>
                  <Group $pad="4px 5px">
                    <Legend>Form</Legend>
                    <Check text="'Strike-through' cancellations" />
                    <Check text="Comb. class names (2a,2b->2ab)" />
                    <Check text="Period label" />
                    <Check text="Print supervisions in period's field" />
                  </Group>
                </TabPanel>
              </Options>
              <ScrollBar size={61.5} />
            </OptionsPane>
          </Frame>
        </FrontWindow>

        <Callout width="100" height="190" viewBox="0 0 100 190" fill="none" aria-hidden="true">
          <defs>
            <filter id="soft" x="-20%" y="-20%" width="150%" height="150%">
              <feDropShadow dx="3" dy="5" stdDeviation="2" floodColor="#000" floodOpacity=".45" />
            </filter>
          </defs>
          <ellipse cx="44" cy="41.500" rx="22.500" ry="20" stroke="#bf4a31" strokeWidth="4" filter="url(#soft)" />
          <path
            d="M42 74h7.500v80l7.500-11 5 1-16.500 35.500L30.500 144l5.500-1 6 11z"
            fill="#bf4a31"
          />
        </Callout>
      </Desktop>
    </>
  );
}
